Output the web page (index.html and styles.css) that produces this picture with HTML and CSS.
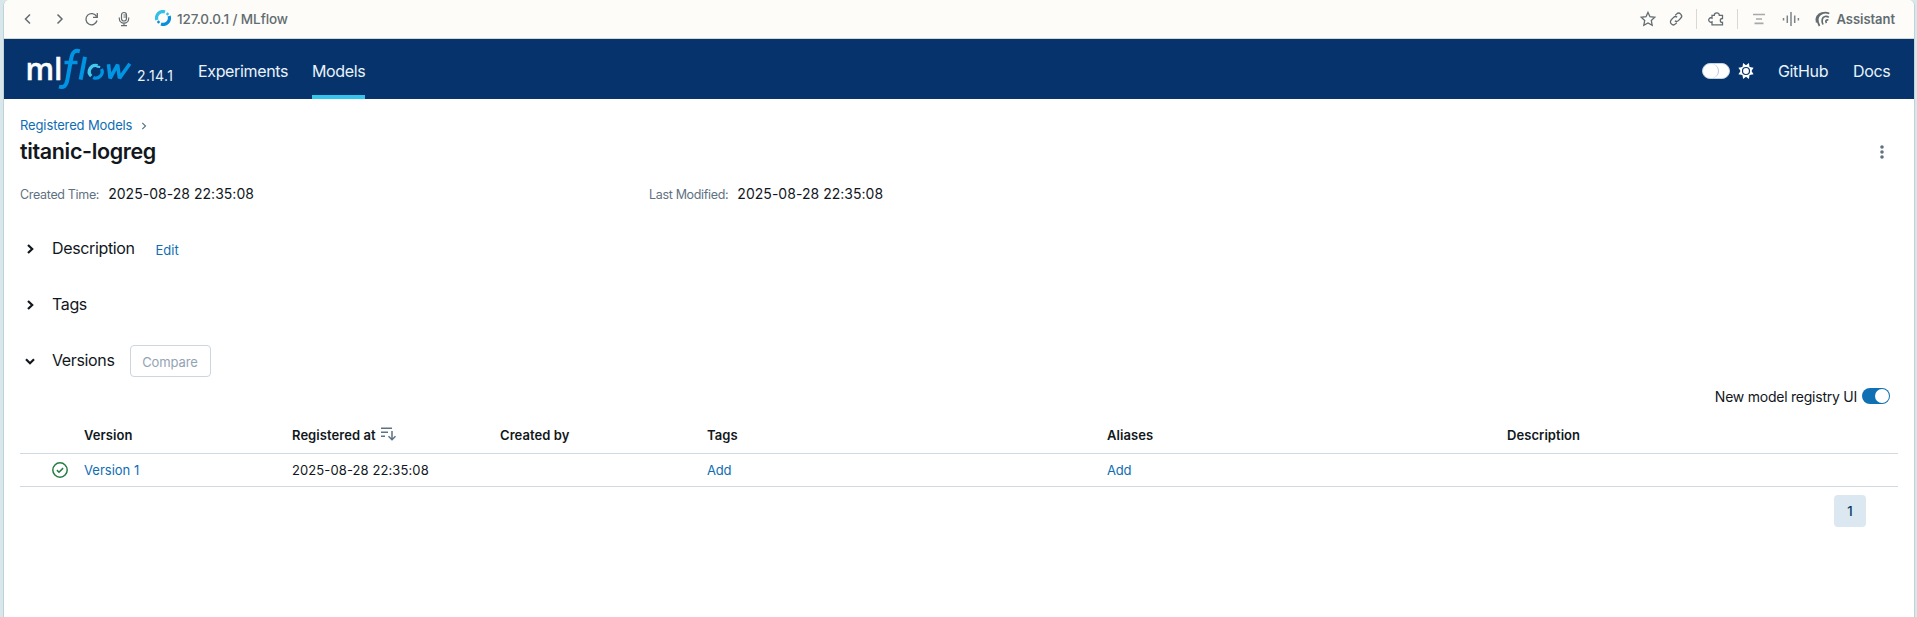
FILE: index.html
```
<!DOCTYPE html>
<html lang="en">
<head>
<meta charset="utf-8">
<title>MLflow</title>
<link rel="stylesheet" href="styles.css">
</head>
<body>
<div class="window">
  <header class="browser">
    <svg class="chrome-left" width="130" height="24" viewBox="0 0 130 24" fill="none" stroke="#626c71" stroke-width="1.500">
      <path d="M26 8.500l-4.500 4.500 4.500 4.500M53.500 8.500l4.500 4.500-4.500 4.500"/>
      <path stroke-width="1.300" d="M92.500 10.500a5.600 5.600 0 1 0 .5 4M93.300 7v4.300h-4.300"/>
      <g stroke-width="1.200"><rect x="117.500" y="6.500" width="5" height="8.500" rx="2.500"/><path d="M115.300 11.500v1a4.700 4.700 0 0 0 9.400 0v-1M120 17.200v2.500M117 19.600h6M119.500 9h3M119.500 11h3"/></g>
    </svg>
    <svg class="favicon" width="16" height="16" viewBox="0 0 16 16" fill="none" stroke-width="3.200">
      <path stroke="#32bfe8" d="M1.900 10A6.400 6.400 0 0 1 10 1.900"/>
      <path stroke="#0b8fdd" d="M14.100 6A6.400 6.400 0 0 1 6 14.100"/>
      <path stroke="#32bfe8" stroke-width="2.600" d="M11.700 3.200l1.600 1.700"/>
      <path stroke="#0b8fdd" stroke-width="2.600" d="M2.700 11.100l1.600 1.700"/>
    </svg>
    <span class="address">127.0.0.1 / MLflow</span>
    <svg class="chrome-right" width="194" height="24" viewBox="0 0 194 24" fill="none" stroke="#626c71" stroke-width="1.300">
      <path d="M12 6.400l2 4.300 4.800.6-3.500 3.300.9 4.700-4.200-2.300-4.200 2.300.9-4.700-3.500-3.300 4.800-.6z"/>
      <path d="M39.300 9.300l1.200-1.200a2.900 2.900 0 0 1 4.200 4.200l-2.300 2.300a2.800 2.800 0 0 1-3.500.3M40.700 16.700l-1.200 1.200a2.900 2.900 0 0 1-4.200-4.200l2.300-2.300a2.800 2.800 0 0 1 3.500-.3"/>
      <path stroke="#d9d9d2" stroke-width="1" d="M60.500 3v20M101.500 3v20"/>
      <path d="M76 9.300h2.300a2.500 2.500 0 1 1 5 0h3.200v3.200h-.3a1.900 1.900 0 0 0 0 3.800h.3v2.600H76v-3a2.200 2.200 0 1 1 0-3.800z"/>
      <path stroke="#a6aaaa" stroke-width="1.700" d="M117 8.500h12M120 13h6M118.500 17.300h9"/>
      <path stroke-width="1.500" stroke="#7c8487" d="M147.500 12v2.500M151.300 9.500v7.500M155 6v14M158.700 9.500v7.500M162.400 12v2.500"/>
      <path stroke-width="1.700" d="M183.500 20c-2.500-4.500-2.500-9.500.8-11.500 2.500-2.200 6-2.300 9-1M187 18.500c-1.800-4-.8-7.500 2-8 1.500-.3 2.800 0 3.800.8M190.500 17c-1.300-2-.7-3.300 1.800-3.200M180.700 16.500c-1.500-4.500.8-8.500 5.800-9.800"/>
    </svg>
    <span class="assistant">Assistant</span>
  </header>

  <nav class="navbar">
    <svg class="logo" width="109" height="46" viewBox="-3 -2 109 46">
      <text class="logo-ml" x="-2.500" y="31.700" textLength="37" lengthAdjust="spacingAndGlyphs">ml</text>
      <g fill="none" stroke="#0194e2">
        <path stroke-width="4" d="M51.800 3.200c-4.800-1.300-7.200.8-8.300 6l-4.200 23c-1.100 5.700-3.800 7.800-8.300 6.500"/>
        <path stroke-width="3.500" d="M36.500 14.500h13"/>
        <path stroke-width="4" d="M57 8.800l-4.400 22.900"/>
        <path stroke-width="3.600" stroke-linejoin="bevel" d="M80.500 16.300l1.600 14 7.500-13.600 1.900 13.600 10.300-14.500"/>
      </g>
      <g fill="none" stroke-width="3.300">
        <path stroke="#43c9ed" d="M63.200 28.200a6.300 6.300 0 0 1 6.300-10.500"/>
        <path stroke="#0194e2" d="M73.500 21a6.300 6.300 0 0 1-8.300 8.500"/>
        <path stroke="#43c9ed" stroke-width="2.200" d="M68.700 18.600l3.500.4"/>
      </g>
    </svg>
    <span class="release">2.14.1</span>
    <a class="nav-link experiments">Experiments</a>
    <a class="nav-link models active">Models</a>
    <span class="theme-switch"></span>
    <svg class="sun" width="16" height="16" viewBox="0 0 16 16"><path fill="#fff" d="M8 2.200L10.900 0l.6 4 4.100.7L13.400 8l2.200 3.300-4.100.7-.6 4L8 13.800 5.100 16l-.6-4-4.100-.7L2.600 8 .4 4.700 4.500 4l.6-4z"/><circle cx="8" cy="8" r="5.400" fill="#fff"/><circle cx="8" cy="8" r="3.500" fill="#fff" stroke="#06336b" stroke-width="1.200"/></svg>
    <a class="nav-link github">GitHub</a>
    <a class="nav-link docs">Docs</a>
  </nav>

  <main class="page">
    <div class="breadcrumb"><a class="link crumb">Registered Models</a><svg width="6" height="8" viewBox="0 0 6 8" fill="none" stroke="#5f7281" stroke-width="1.200"><path d="M1.300.8L4.500 4 1.300 7.200"/></svg></div>
    <div class="title-row">
      <h1>titanic-logreg</h1>
      <svg width="4" height="14" viewBox="0 0 4 14" fill="#5f7281"><circle cx="2" cy="2" r="1.800"/><circle cx="2" cy="7" r="1.800"/><circle cx="2" cy="12" r="1.800"/></svg>
    </div>
    <div class="facts">
      <div class="fact"><span class="label">Created Time:</span><span class="date">2025-08-28 22:35:08</span></div>
      <div class="fact"><span class="label">Last Modified:</span><span class="date">2025-08-28 22:35:08</span></div>
    </div>
    <section class="section description">
      <svg class="chevron" width="12" height="12" viewBox="0 0 12 12"><path d="M4 2l4.200 4L4 10"/></svg>
      <h2>Description</h2><a class="link edit">Edit</a>
    </section>
    <section class="section tags">
      <svg class="chevron" width="12" height="12" viewBox="0 0 12 12"><path d="M4 2l4.200 4L4 10"/></svg>
      <h2>Tags</h2>
    </section>
    <section class="section versions">
      <svg class="chevron" width="12" height="12" viewBox="0 0 12 12"><path d="M2 4.200l4 4 4-4"/></svg>
      <h2>Versions</h2><button class="compare" disabled>Compare</button>
    </section>
    <div class="registry-toggle"><span>New model registry UI</span><span class="switch-on"></span></div>
    <div class="table">
      <div class="row head">
        <span></span><span>Version</span>
        <span class="sorted"><span>Registered at</span><svg width="15" height="14" viewBox="0 0 15 14" fill="none" stroke="#5f7281" stroke-width="1.500"><path d="M0 1.200h11M0 5.200h7M0 9.200h4M11 4v8.500M7.500 9.300l3.500 3.500 3.500-3.500"/></svg></span>
        <span>Created by</span><span>Tags</span><span>Aliases</span><span>Description</span>
      </div>
      <div class="row body">
        <span class="status"><svg width="16" height="16" viewBox="0 0 16 16" fill="none" stroke="#277c43" stroke-width="1.500"><circle cx="8" cy="8" r="7.200"/><path d="M4.900 8.100l2.100 2.100 4.100-4.100"/></svg></span>
        <a class="link">Version 1</a><span class="stamp">2025-08-28 22:35:08</span><span></span><a class="link add">Add</a><a class="link add">Add</a><span></span>
      </div>
    </div>
    <div class="pagination"><span class="page-number">1</span></div>
  </main>
</div>
</body>
</html>
```
FILE: styles.css
```
* { box-sizing: border-box; }
body {
  margin: 0;
  padding: 0 2px 0 3px;
  height: 617px;
  overflow: hidden;
  background: #d9e7ea;
  color: #11171c;
  font-family: Inter, "Liberation Sans", sans-serif;
  font-size: 13px;
}
svg { display: block; flex: none; }
h1, h2 { margin: 0; }
.window {
  height: 617px;
  overflow: hidden;
  background: #fff;
  border: solid #b9d5db;
  border-width: 0 1px;
  border-radius: 6px 6px 0 0;
}
.browser {
  display: flex;
  align-items: center;
  height: 39px;
  padding-bottom: 1px;
  background: #fdfcf9;
  border-bottom: 1px solid #d5d9d3;
  color: #626c71;
}
.chrome-left { margin-bottom: 2px; }
.favicon { margin: 0 6px 1px 21px; }
.address { font-size: 13.500px; font-weight: 500; letter-spacing: -0.08px; }
.chrome-right { margin: 0 7px 2px auto; }
.assistant { margin-right: 19px; font-weight: 600; letter-spacing: -0.04px; }
.navbar {
  display: flex;
  align-items: center;
  height: 60px;
  background: #06336b;
  color: #e9f3fb;
  font-size: 16px;
}
.logo { margin: 0 3px 0 21px; }
.logo-ml { fill: #fff; stroke: #fff; stroke-width: 0.4px; font: 600 30px "Open Sans", sans-serif; }
.release { width: 61px; margin-top: 13px; font-size: 14px; letter-spacing: 0.35px; }
.nav-link { display: flex; align-items: center; height: 60px; padding-top: 4px; letter-spacing: -0.35px; white-space: nowrap; }
.nav-link.experiments { width: 90px; }
.nav-link.models { width: 53px; margin-left: 24px; }
.nav-link.active { border-bottom: 4px solid #34c4ec; padding-top: 8px; }
.theme-switch {
  width: 28px;
  height: 16px;
  margin: 4px 8px 0 auto;
  border-radius: 8px;
  background: #fff;
  border: 1px solid #c5d1dc;
}
.theme-switch::before {
  content: "";
  display: block;
  width: 15px;
  height: 14px;
  border-radius: 8px;
  border-right: 1px solid #b9c7d3;
}
.sun { margin-top: 4px; }
.github { width: 51px; margin-left: 24px; }
.docs { width: 37px; margin: 0 24px; }
.page { padding: 16px 16px 0; }
.link { color: #0e6db3; }
.breadcrumb { display: flex; align-items: center; gap: 9px; height: 20px; }
.breadcrumb svg { margin-top: 2px; }
.crumb { letter-spacing: -0.12px; }
.title-row { display: flex; align-items: center; justify-content: space-between; height: 32px; padding-right: 14px; }
.title-row svg { margin-top: 1px; }
h1 { font-size: 21.500px; font-weight: 600; line-height: 28px; letter-spacing: -0.36px; }
.facts { display: grid; grid-template-columns: 629px 1fr; margin-top: 16px; height: 20px; }
.fact { display: flex; align-items: center; gap: 9px; }
.label { margin-top: 2px; color: #5f7281; font-size: 12.500px; letter-spacing: -0.33px; }
.date { margin-top: 1px; font-size: 14px; letter-spacing: 0.03px; }
.section { display: flex; align-items: center; height: 32px; padding-left: 4px; }
.description { margin-top: 30px; }
.tags, .versions { margin-top: 24px; }
.chevron { margin-right: 15px; fill: none; stroke: #11171c; stroke-width: 2.200; }
h2 { margin: 0 0 2px 1px; font-size: 16px; font-weight: 400; letter-spacing: -0.36px; }
.edit { margin: 1px 0 0 21px; letter-spacing: -0.05px; }
.compare {
  width: 81px;
  height: 32px;
  margin-left: 15px;
  padding: 1px 0 0;
  border: 1px solid #cbd6df;
  border-radius: 4px;
  background: #fff;
  color: #92a4b3;
  font: 13px Inter, sans-serif;
  letter-spacing: -0.1px;
}
.registry-toggle { display: flex; align-items: center; justify-content: flex-end; gap: 5px; height: 20px; margin-top: 9px; padding-right: 8px; font-size: 14px; letter-spacing: -0.24px; }
.switch-on { display: flex; justify-content: flex-end; width: 28px; height: 16px; padding: 1px; border-radius: 8px; background: #1170b3; }
.switch-on::before { content: ""; width: 14px; height: 14px; border-radius: 50%; background: #fff; }
.table { margin-top: 11px; }
.row { display: grid; grid-template-columns: 64px 208px 208px 207px 400px 400px 1fr; align-items: center; border-bottom: 1px solid #d1d9e1; }
.head { height: 37px; font-weight: 600; letter-spacing: 0.06px; }
.body { height: 33px; }
.sorted { display: flex; align-items: center; gap: 5px; }
.sorted svg { margin-top: -2px; }
.stamp { letter-spacing: 0.1px; }
.add { letter-spacing: -0.2px; }
.status { padding-left: 32px; }
.pagination { display: flex; justify-content: flex-end; padding: 8px 32px 0 0; }
.page-number { display: grid; place-items: center; width: 32px; height: 32px; border-radius: 4px; background: #dbe8f1; color: #04355d; font-weight: 500; }
```
